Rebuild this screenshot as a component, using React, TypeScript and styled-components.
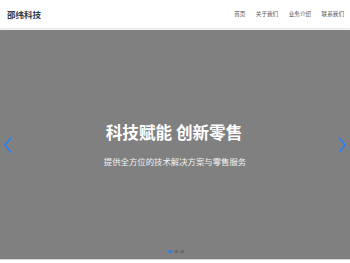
import styled, { createGlobalStyle } from 'styled-components'

const GlobalStyle = createGlobalStyle`
  html, body {
    margin: 0;
    padding: 0;
    background: #fff;
    font-family: "Noto Sans CJK SC", "Noto Sans", sans-serif;
  }
`

const Header = styled.header`
  height: 28px;
  display: flex;
  align-items: center;
  justify-content: space-between;
  padding: 0 6px 0 7px;
  border-bottom: 1px solid #e8e8e8;
  box-shadow: 0 1px 2px rgba(0, 0, 0, 0.06);
  background: #fff;
`

const Logo = styled.div`
  font-size: 8.5px;
  font-weight: 700;
  color: #2c3e50;
`

const Nav = styled.nav`
  display: flex;
  gap: 10.5px;
`

const NavLink = styled.a`
  font-size: 5.6px;
  color: #555;
  text-decoration: none;
`

const Carousel = styled.section`
  position: relative;
  height: 229px;
  margin-top: 1px;
  background: #808080;
  display: flex;
  flex-direction: column;
  align-items: center;
  justify-content: center;
  color: #fff;
`

const Title = styled.h1`
  margin: 0 0 0 -2px;
  font-size: 16.6px;
  font-weight: 700;
  line-height: 1.2;
`

const Subtitle = styled.p`
  margin: 14px 0 0;
  font-size: 8.4px;
  line-height: 1.2;
  color: #f2f2f2;
`

const Arrow = styled.button<{ $side: 'left' | 'right' }>`
  position: absolute;
  top: 50%;
  ${({ $side }) => ($side === 'left' ? 'left: 3px;' : 'right: 3px;')}
  transform: translateY(-50%);
  padding: 0;
  border: 0;
  background: none;
  display: flex;
`

const Dots = styled.div`
  position: absolute;
  bottom: 6px;
  left: 50%;
  transform: translateX(-50%);
  margin-left: 1px;
  display: flex;
  gap: 2.5px;
`

const Dot = styled.span<{ $active?: boolean }>`
  width: 3.5px;
  height: 3.5px;
  border-radius: 50%;
  background: ${({ $active }) => ($active ? '#1e80ff' : '#6a6a6a')};
`

const Footer = styled.div`
  height: 5px;
  border-top: 1px solid #d8d8d8;
  background: #fff;
`

export default function App() {
  return (
    <>
      <GlobalStyle />
      <Header>
        <Logo>邵纬科技</Logo>
        <Nav>
          <NavLink href="#">首页</NavLink>
          <NavLink href="#">关于我们</NavLink>
          <NavLink href="#">业务介绍</NavLink>
          <NavLink href="#">联系我们</NavLink>
        </Nav>
      </Header>
      <Carousel>
        <Title>科技赋能 创新零售</Title>
        <Subtitle>提供全方位的技术解决方案与零售服务</Subtitle>
        <Arrow $side="left" aria-label="上一张">
          <svg width="10" height="18" viewBox="0 0 10 18">
            <path d="M8 1.5 L2 9 L8 16.5" fill="none" stroke="#1e80ff" strokeWidth="1.4" />
          </svg>
        </Arrow>
        <Arrow $side="right" aria-label="下一张">
          <svg width="10" height="18" viewBox="0 0 10 18">
            <path d="M2 1.5 L8 9 L2 16.5" fill="none" stroke="#1e80ff" strokeWidth="1.4" />
          </svg>
        </Arrow>
        <Dots>
          <Dot $active />
          <Dot />
          <Dot />
        </Dots>
      </Carousel>
      <Footer />
    </>
  )
}
